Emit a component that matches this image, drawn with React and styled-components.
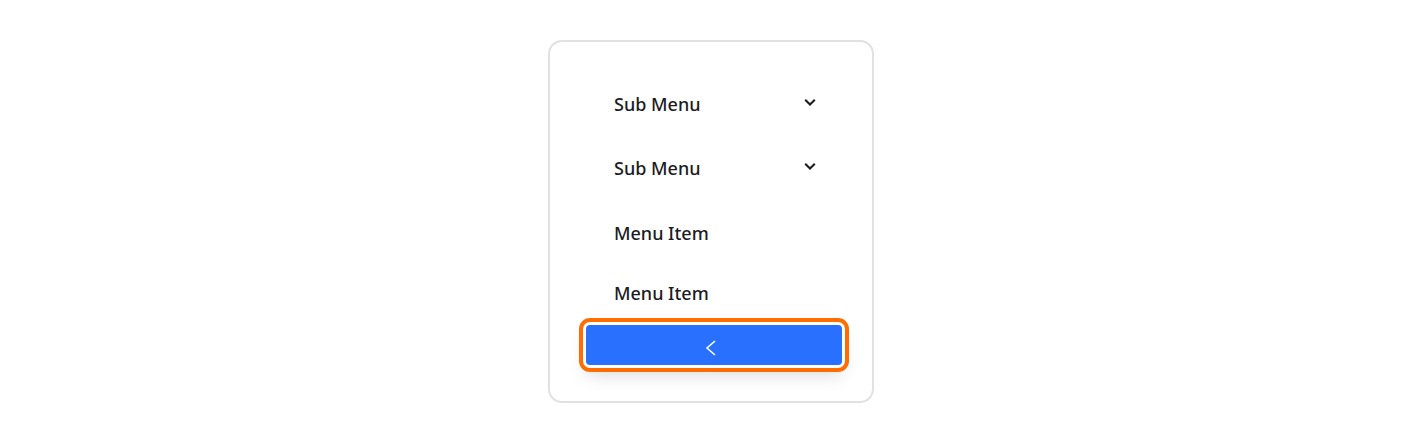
import React from "react";
import styled, { createGlobalStyle } from "styled-components";

const GlobalStyle = createGlobalStyle`
  * { box-sizing: border-box; }
  body {
    margin: 0;
    background: #ffffff;
    font-family: "Noto Sans", "Open Sans", sans-serif;
  }
`;

const Page = styled.div`
  display: flex;
  justify-content: center;
  padding-top: 40px;
`;

const Card = styled.div`
  width: 326px;
  height: 363px;
  border: 2px solid #e1e1e4;
  border-radius: 14px;
  padding: 38px 30px 0 36px;
  display: flex;
  flex-direction: column;
`;

const Row = styled.div`
  height: 48px;
  display: flex;
  align-items: center;
  justify-content: space-between;
  padding: 0 25px 0 28px;
  margin-bottom: ${({ $gap }) => $gap}px;
  font-size: 18px;
  font-weight: 500;
  color: #1c1c1f;
  cursor: pointer;
`;

const Chevron = styled.svg`
  width: 14px;
  height: 14px;
  margin-top: -4px;
`;

const CollapseButton = styled.button`
  width: 256px;
  height: 40px;
  margin-top: 8px;
  border: none;
  border-radius: 4px;
  background: #2970ff;
  display: flex;
  align-items: center;
  justify-content: center;
  outline: 4px solid #ff6d00;
  outline-offset: 3px;
  box-shadow: 0 0 0 3px #ffffff, 0 10px 18px rgba(0, 0, 0, 0.14);
  cursor: pointer;
  padding: 0;
`;

const BackIcon = styled.svg`
  margin-left: -7px;
  margin-top: 5px;
`;

const DownIcon = () => (
  <Chevron viewBox="0 0 14 14" fill="none">
    <path d="M2.2 4.8 L7 9.5 L11.8 4.8" stroke="#1c1c1f" strokeWidth="2.1" />
  </Chevron>
);

const items = [
  { label: "Sub Menu", sub: true, gap: 16 },
  { label: "Sub Menu", sub: true, gap: 17 },
  { label: "Menu Item", gap: 12 },
  { label: "Menu Item", gap: 0 },
];

export default function App() {
  return (
    <>
      <GlobalStyle />
      <Page>
        <Card>
          {items.map((item, i) => (
            <Row key={i} $gap={item.gap}>
              {item.label}
              {item.sub && <DownIcon />}
            </Row>
          ))}
          <CollapseButton aria-label="collapse">
            <BackIcon width="16" height="18" viewBox="0 0 16 18" fill="none">
              <path d="M12 2 L4 9 L12 16" stroke="#ffffff" strokeWidth="1.6" />
            </BackIcon>
          </CollapseButton>
        </Card>
      </Page>
    </>
  );
}
